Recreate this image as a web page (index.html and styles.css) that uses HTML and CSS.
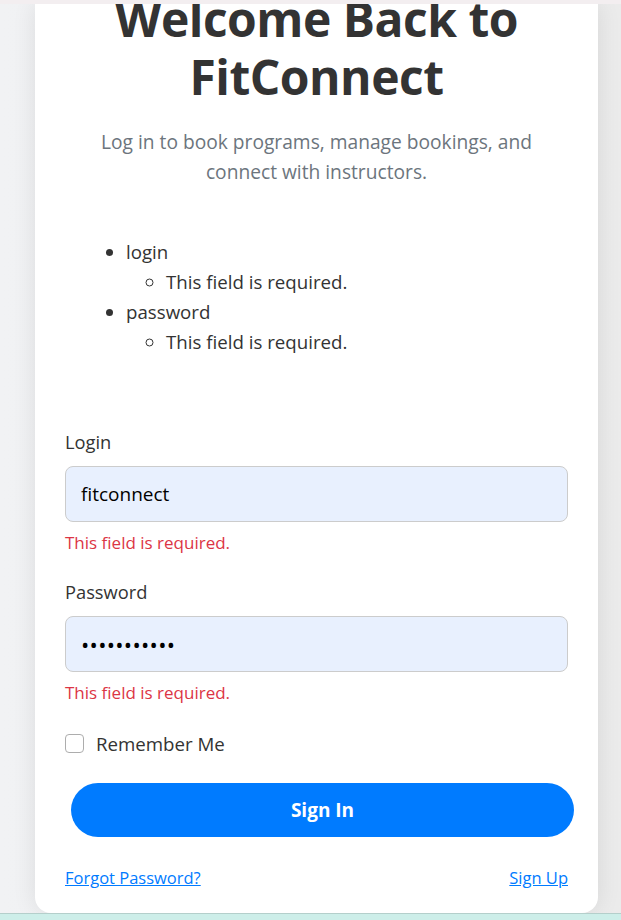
FILE: index.html
```html
<!DOCTYPE html>
<html lang="en">
<head>
<meta charset="utf-8">
<title>FitConnect Login</title>
<link rel="stylesheet" href="styles.css">
</head>
<body>
<div class="topbar"></div>
<main class="page">
  <section class="card">
    <h1 class="title">Welcome Back to FitConnect</h1>
    <p class="subtitle">Log in to book programs, manage bookings, and connect with instructors.</p>
    <ul class="errors">
      <li>login
        <ul><li>This field is required.</li></ul>
      </li>
      <li>password
        <ul><li>This field is required.</li></ul>
      </li>
    </ul>
    <form class="form">
      <div class="field">
        <label class="label" for="login">Login</label>
        <input class="input" id="login" type="text" value="fitconnect">
        <div class="error">This field is required.</div>
      </div>
      <div class="field">
        <label class="label" for="password">Password</label>
        <input class="input input-password" id="password" type="password" value="fitconnect1">
        <div class="error">This field is required.</div>
      </div>
      <label class="remember"><span class="box"></span>Remember Me</label>
      <button class="btn" type="button">Sign In</button>
      <div class="links">
        <a href="#">Forgot Password?</a>
        <a href="#">Sign Up</a>
      </div>
    </form>
  </section>
</main>
<div class="footer"></div>
</body>
</html>
```

FILE: styles.css
```css
* { box-sizing: border-box; }
html, body { margin: 0; padding: 0; }
body {
  font-family: "Open Sans", "Noto Sans", sans-serif;
  background: #cdeee9;
  height: 920px;
  overflow: hidden;
  color: #333;
}
.topbar {
  height: 4px;
  background: #f3eef0;
}
.page {
  height: 910px;
  background: linear-gradient(90deg, #f1f2f4 0%, #ebebeb 100%);
  display: flex;
  justify-content: center;
  padding-left: 12px;
  overflow: hidden;
  border-bottom: 1px solid #b4cfcb;
}
.card {
  width: 563px;
  height: 909px;
  flex: none;
  background: #fff;
  border-radius: 0 0 16px 16px;
  padding: 0 30px;
  box-shadow: 0 0 24px rgba(0,0,0,0.09);
  overflow: hidden;
  display: flex;
  flex-direction: column;
}
.title {
  margin: -14px 0 0;
  font-size: 48px;
  line-height: 58px;
  font-weight: 700;
  text-align: center;
  color: #333;
  letter-spacing: -0.5px;
}
.subtitle {
  margin: 21px 20px 0;
  font-size: 19.2px;
  line-height: 30px;
  color: #6c757d;
  text-align: center;
}
.errors {
  margin: 50px 0 0;
  padding-left: 61px;
  font-size: 18.7px;
  line-height: 30px;
  color: #333;
}
.errors ul {
  margin: 0;
  padding-left: 40px;
  list-style: circle;
}
.form {
  margin-top: 73px;
  display: flex;
  flex-direction: column;
}
.field {
  display: flex;
  flex-direction: column;
  margin-bottom: 25px;
}
.label {
  font-size: 18.3px;
  line-height: 24px;
  color: #333;
  margin-bottom: 12px;
}
.input {
  height: 56px;
  border: 1px solid #ccc;
  border-radius: 8px;
  background: #e8f0fe;
  padding: 0 15px;
  font-family: inherit;
  font-size: 19px;
  color: #000;
}
.input-password {
  font-size: 22px;
  letter-spacing: 0.3px;
}
.error {
  margin-top: 9px;
  font-size: 17px;
  line-height: 24px;
  color: #dc3545;
}
.remember {
  display: flex;
  align-items: center;
  gap: 12px;
  height: 24px;
  margin-top: 1px;
  font-size: 18.7px;
  color: #333;
}
.box {
  width: 19px;
  height: 19px;
  border: 1px solid #adadad;
  border-radius: 4px;
  background: #fff;
}
.btn {
  margin: 28px 0 0 6px;
  width: 503px;
  height: 54px;
  border: none;
  border-radius: 27px;
  background: #007bff;
  color: #fff;
  font-family: inherit;
  font-size: 19px;
  font-weight: 700;
}
.links {
  margin-top: 29px;
  display: flex;
  justify-content: space-between;
  font-size: 16.5px;
  line-height: 24px;
}
.links a {
  color: #007bff;
  text-decoration: underline;
}
.footer {
  height: 5px;
  background: #cdeee9;
}
```
